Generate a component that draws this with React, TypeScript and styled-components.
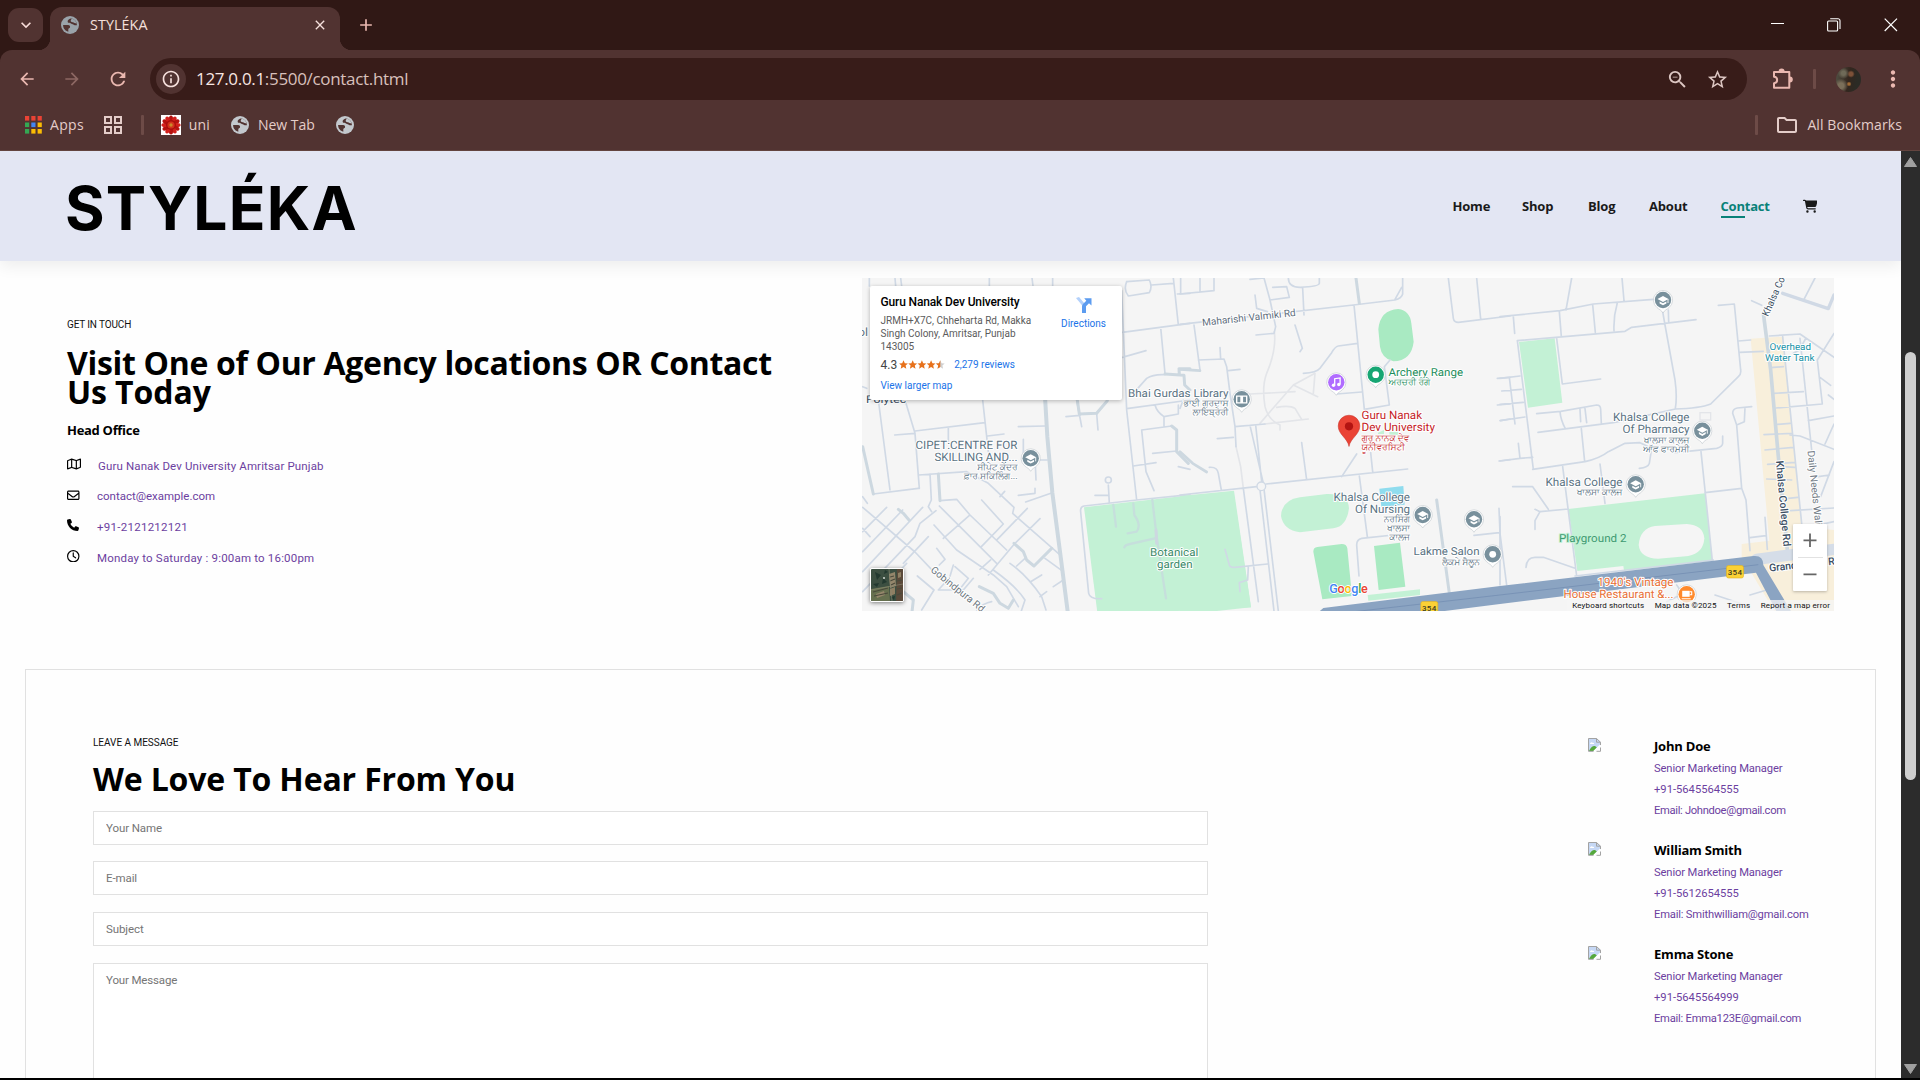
import React from 'react';
import styled, { createGlobalStyle } from 'styled-components';
import { FaCartShopping, FaRegMap, FaRegEnvelope, FaPhone, FaRegClock } from 'react-icons/fa6';
import { MdZoomOut, MdStarBorder, MdArrowBack, MdArrowForward, MdRefresh, MdOutlineFolder, MdClose, MdAdd, MdKeyboardArrowDown, MdMoreVert, MdInfoOutline } from 'react-icons/md';

const SANS = 'Roboto, "Noto Sans", sans-serif';
const UI = '"Open Sans", "Noto Sans", sans-serif';

const Global = createGlobalStyle`
  * { box-sizing: border-box; margin: 0; padding: 0; }
  body { background: #000; overflow: hidden; }
  svg { display: block; flex: none; }
`;

/* ---------- browser chrome ---------- */
const Window = styled.div`
  width: 1920px; height: 1080px; display: flex; flex-direction: column;
  overflow: hidden; border-bottom: 2px solid #000; background: #301815; font-family: ${UI};
`;
const TabStrip = styled.div`
  height: 50px; flex: none; display: flex; align-items: flex-end; background: #301815; padding-left: 8px;
`;
const TabSearch = styled.div`
  width: 35px; height: 34px; margin: 0 7px 8px 0; border-radius: 11px; background: #513331;
  display: flex; align-items: center; justify-content: center; color: #f8dcd8;
`;
const Tab = styled.div`
  position: relative; width: 290px; height: 43px; border-radius: 12px 12px 0 0; background: #513331;
  display: flex; align-items: center; padding: 0 12px 7px 11px; color: #f6e0dc;
  &::before, &::after {
    content: ''; position: absolute; bottom: 0; width: 12px; height: 12px;
  }
  &::before { left: -12px; background: radial-gradient(circle at 0 0, transparent 12px, #513331 12.5px); }
  &::after { right: -12px; background: radial-gradient(circle at 100% 0, transparent 12px, #513331 12.5px); }
`;
const TabTitle = styled.span`
  flex: 1; margin-left: 11px; font-size: 14.3px; line-height: 20px; letter-spacing: 0.1px; white-space: nowrap;
`;
const NewTab = styled.div`
  width: 24px; height: 24px; margin: 0 0 13px 14px; color: #eab8b0;
  display: flex; align-items: center; justify-content: center;
`;
const WindowButtons = styled.div`
  margin-left: auto; align-self: flex-start; display: flex; padding: 18px 22px 0 0; gap: 43px;
`;
const Toolbar = styled.div`
  height: 101px; flex: none; background: #513331; border-radius: 12px 12px 0 0; border-bottom: 1px solid #63443f;
`;
const NavRow = styled.div`
  height: 58px; display: flex; align-items: center; padding: 0 14px 0 15px; color: #eab8b0;
`;
const NavIcon = styled.div<{ $dim?: boolean }>`
  width: 24px; height: 24px; margin-right: 21px; display: flex; align-items: center; justify-content: center;
  color: ${p => (p.$dim ? '#8d6863' : '#eab8b0')};
  &:nth-child(3) { margin-left: 1px; margin-right: 20px; }
`;
const Omnibox = styled.div`
  width: 1597px; height: 42px; border-radius: 21px; background: #381c19;
  display: flex; align-items: center; padding: 0 18px 0 6px; color: #dcc6c2;
`;
const SiteInfo = styled.div`
  width: 30px; height: 30px; border-radius: 50%; background: #513331; color: #f6e0dc;
  display: flex; align-items: center; justify-content: center;
`;
const Url = styled.span`
  flex: 1; margin-left: 10px; font-size: 17px; line-height: 24px; letter-spacing: -0.32px; color: #d8c0bc;
`;
const Host = styled.span`color: #f8e6e2;`;
const OmniAction = styled.div`margin-left: 17px;`;
const Divider = styled.div<{ $l: number; $r: number }>`
  width: 3px; height: 20px; border-radius: 1px; background: #6d4b47; margin: 0 ${p => p.$r}px 0 ${p => p.$l}px;
`;
const Avatar = styled.div`
  width: 25px; height: 25px; border-radius: 50%; margin-right: 19px;
  background:
    radial-gradient(circle at 60% 28%, #7d5138 0 8%, transparent 16%),
    radial-gradient(circle at 52% 68%, #a06a35 0 5%, transparent 12%),
    radial-gradient(circle at 20% 75%, #7b6f5a 0 10%, transparent 26%),
    radial-gradient(circle at 30% 25%, #6f6a58 0 8%, transparent 22%),
    linear-gradient(100deg, #4d4a3e 10%, #33261e 50%, #2b2b25 80%);
`;
const Bookmarks = styled.div`
  height: 32px; margin-top: 1px; display: flex; align-items: center; padding: 0 18px 0 25px; color: #e4cdc9;
  font-size: 14px; line-height: 20px;
`;
const BookmarkLabel = styled.span<{ $l: number; $r: number; $ls?: number }>`
  margin: 0 ${p => p.$r}px 0 ${p => p.$l}px; letter-spacing: ${p => p.$ls ?? 0}px; white-space: nowrap;
`;
const Spacer = styled.div`flex: 1;`;

/* ---------- page ---------- */
const Viewport = styled.div`flex: 1; min-height: 0; display: flex; background: #fff;`;
const Page = styled.div`
  width: 1901px; height: 100%; overflow: hidden; background: #fefefe; font-family: ${SANS}; color: #000;
`;
const Scrollbar = styled.div`
  width: 19px; background: #2c2c2c; display: flex; flex-direction: column; align-items: center; padding: 6px 0 4px;
`;
const Thumb = styled.div`width: 11px; height: 428px; margin: 185px 0 auto; border-radius: 6px; background: #cfcfcf;`;
const Header = styled.header`
  position: relative; height: 110px; background: #e3e6f3; box-shadow: 0 5px 15px rgba(0, 0, 0, 0.07);
  display: flex; align-items: center; justify-content: space-between; padding: 0 84px 0 65px;
`;
const Logo = styled.h1`
  font-family: Inter, ${UI}; font-size: 60.5px; line-height: 62px; font-weight: 700; letter-spacing: 1.2px; padding-top: 4px;
`;
const Menu = styled.nav`display: flex; align-items: center; gap: 33px; padding-top: 1px;`;
const MenuLink = styled.a<{ $active?: boolean; $w: number }>`
  position: relative; width: ${p => p.$w}px; font: 700 13px/18px ${UI}; margin-top: -2px;
  letter-spacing: -0.2px; white-space: nowrap; color: ${p => (p.$active ? '#088178' : '#1a1a1a')};
  &::after {
    content: ''; position: absolute; left: 0; bottom: -3px; width: 24px; height: 2px;
    background: ${p => (p.$active ? '#088178' : 'transparent')};
  }
`;
const Contact = styled.section`
  display: flex; justify-content: space-between; padding: 17px 67px 0;
`;
const Details = styled.div`width: 720px; padding-top: 39px;`;
const Kicker = styled.p<{ $ls: number }>`
  font-size: 10px; line-height: 16px; letter-spacing: ${p => p.$ls}px; color: #111;
`;
const Headline = styled.h2<{ $mt: number; $lh: number; $ls: number }>`
  margin-top: ${p => p.$mt}px; font: 700 32px/${p => p.$lh}px ${UI};
  letter-spacing: ${p => p.$ls}px; white-space: nowrap;
`;
const HeadlineTail = styled.span`letter-spacing: -0.1px;`;
const Office = styled.h3`margin: 16px 0 17.8px; font: 700 13px/16px ${UI}; letter-spacing: -0.3px;`;
const InfoRow = styled.li`display: flex; align-items: center; height: 20px; margin-bottom: 10.6px; list-style: none;`;
const InfoIcon = styled.span<{ $w: number }>`width: ${p => p.$w}px; font-size: 13px; padding-bottom: 3px;`;
const InfoText = styled.span<{ $ls: number }>`
  font-size: 11.5px; line-height: 20px; color: #6c3fa0; letter-spacing: ${p => p.$ls}px; white-space: nowrap;
`;
const MapFrame = styled.div`position: relative; width: 972px; height: 333px; background: #f5f5f5; overflow: hidden;`;
const PlaceCard = styled.div`
  position: absolute; left: 8px; top: 8px; width: 252px; height: 114px; background: #fff; border-radius: 2px;
  box-shadow: 0 1px 4px rgba(0, 0, 0, 0.28); display: flex; justify-content: space-between; padding: 8px 16px 0 10.5px;
`;
const PlaceName = styled.div`font-size: 12px; font-weight: 500; line-height: 16px; letter-spacing: -0.14px; white-space: nowrap;`;
const Address = styled.div`margin-top: 4px; width: 158px; font-size: 10px; line-height: 13px; color: #5b5b5b;`;
const Rating = styled.div`display: flex; align-items: center; height: 18px; margin-top: 2.5px; font-size: 12px; color: #444;`;
const Stars = styled.svg`margin: 0 9px 0 2px;`;
const MapLink = styled.a`font-size: 10px; line-height: 14px; color: #1a73e8; white-space: nowrap;`;
const LargerMap = styled.div`margin-top: 5.5px; line-height: 14px; display: flex;`;
const Directions = styled.div`display: flex; flex-direction: column; align-items: center; gap: 4px; padding-top: 3px;`;
const Satellite = styled.div`
  position: absolute; left: 8px; top: 290px; width: 34px; height: 34px; border: 1px solid #fff; border-radius: 2px;
  box-shadow: 0 1px 4px rgba(0, 0, 0, 0.5); overflow: hidden;
`;
const ZoomControl = styled.div`
  position: absolute; right: 7px; top: 246px; width: 34px; height: 67px; background: #fff; border-radius: 1px;
  box-shadow: 0 1px 3px rgba(0, 0, 0, 0.25);
`;
const Attribution = styled.div`
  position: absolute; right: 0; bottom: 0; height: 11px; padding: 0 4px 0 5px; display: flex; gap: 10.5px;
  background: rgba(245, 245, 245, 0.75); font-size: 8px; line-height: 11px; letter-spacing: 0.14px; color: #111; white-space: nowrap;
`;

/* ---------- form ---------- */
const FormSection = styled.section`
  margin: 58px 25px 0 25px; height: 520px; border: 1px solid #e1e1e1; padding: 65px 67px 0;
  display: flex; justify-content: space-between;
`;
const Form = styled.form`width: 1115px; display: flex; flex-direction: column;`;
const FieldGroup = styled.div`margin-top: 14.6px; display: flex; flex-direction: column; gap: 16.75px;`;
const Field = styled.input`
  height: 34px; border: 1px solid #e1e1e1; padding: 0 12px; font: 11.5px ${SANS}; outline: none; background: #fff;
  letter-spacing: -0.1px;
  &::placeholder { color: #757575; opacity: 1; }
`;
const Message = styled.textarea`
  height: 180px; border: 1px solid #e1e1e1; padding: 8.5px 12px; font: 11.5px/16px ${SANS}; outline: none; resize: none;
  background: #fff; letter-spacing: -0.15px;
  &::placeholder { color: #757575; opacity: 1; }
`;
const People = styled.div`width: 220px; padding-top: 1px; display: flex; flex-direction: column; gap: 20px;`;
const Person = styled.div`display: flex; gap: 53px; svg { margin-top: 2px; }`;
const PersonName = styled.p`
  font: 700 13px/20px ${UI}; letter-spacing: -0.2px; white-space: nowrap; padding-bottom: 2px;
`;
const PersonLine = styled.p<{ $ls: number }>`
  font-size: 11.2px; line-height: 21px; letter-spacing: ${p => p.$ls}px; color: #6c3fa0; white-space: nowrap;
  &:last-child { margin-bottom: -1px; }
`;

/* ---------- small drawings ---------- */
const Globe = ({ fill = '#c3c8cd' }: { fill?: string }) => (
  <svg width="18" height="18" viewBox="0 0 18 18">
    <circle cx="9" cy="9" r="9" fill={fill} />
    <path d="M10.3 2.2 C7.5 3 6 4.6 6.8 6.2 C7.4 7.3 9 6.6 10 7.4 C11 8.4 12.6 8 13.6 9.2 L15.9 9.2 C15.9 5.8 13.6 3 10.3 2.2Z" fill="#513331" />
    <path d="M2.1 9 L7 9.1 C8.7 9.3 9.4 10.4 9 11.4 C8.6 12.3 7.3 12.2 7.3 13.3 L7.3 15.7 C4.3 15 2.1 12.4 2.1 9Z" fill="#513331" />
    <path d="M10.3 2.2 C10.9 3.4 9 4.5 9.9 5.6 C10.9 6.5 12.5 6 13.5 7 L15.6 7.4 C14.9 4.6 12.9 2.7 10.3 2.2Z" fill={fill} />
  </svg>
);

const AppsIcon = () => {
  const colors = ['#ea4335', '#ea4335', '#ea4335', '#34a853', '#4285f4', '#fbbc04', '#34a853', '#fbbc04', '#fbbc04'];
  return (
    <svg width="17" height="18" viewBox="0 0 17 18">
      {colors.map((c, i) => <rect key={i} x={(i % 3) * 6.3} y={Math.floor(i / 3) * 6.5} width="4.2" height="4.6" fill={c} />)}
    </svg>
  );
};

const Puzzle = () => (
  <svg width="22" height="22" viewBox="0 0 22 22">
    <path d="M2 4H17.3V19.8H2V15.2C6.2 15 6.2 9 2 8.8Z" fill="none" stroke="#eab8b0" strokeWidth="2" strokeLinejoin="round" />
    <path d="M6.6 3.5A3 3 0 0 1 12.6 3.5ZM17.8 8.6A3 3 0 0 1 17.8 14.6Z" fill="#eab8b0" />
  </svg>
);

const FlowerIcon = () => (
  <svg width="20" height="20" viewBox="-10 -10 20 20">
    <rect x="-10" y="-10" width="20" height="20" fill="#fff" />
    {Array.from({ length: 12 }, (_, i) => (
      <ellipse key={i} cx="0" cy="-6" rx="2.1" ry="3.6" fill={i % 2 ? '#d3201c' : '#b5120f'} transform={`rotate(${i * 30})`} />
    ))}
    <circle r="5" fill="#a90f0c" /><circle r="3.6" fill="#d3321c" /><circle r="1.7" fill="#c98a2b" />
  </svg>
);

const BrokenImage = () => (
  <svg width="13" height="14" viewBox="0 0 13 14">
    <path d="M.5 .5 H8.5 L12.5 4 V7.5 L7 13.2 H.5Z" fill="#c6d8f5" />
    <path d="M2 5.5 q1.5 -2 2.6 -.8 q1.6 -.2 1.6 1.3 H2Z" fill="#fff" />
    <path d="M1 13 C2.5 9.5 5 7.5 7 8 L9 9.5 L6 13Z" fill="#54a83c" />
    <path d="M12.5 7.2 L5.8 13.5" stroke="#fff" strokeWidth="1.6" />
    <path d="M5.5 13.3 H.5 V.5 H8.5 L12.5 4.2 V7 M8.5 .5 V4.2 H12.5 M12.5 9.5 V13.3 H8.5" fill="none" stroke="#a3a3a3" />
  </svg>
);

/* ---------- map ---------- */
const ROAD = '#d0d9e5';
const WIDE = '#cdd8e0';

const roadsWest = `
M28 24V48 M105 24L107 48 M122 24L125 48 M388 24V48 M516 24L519 48 M578 24V48
M800 35L868 30Q878 50 868 68L805 78Q790 60 800 35 M875 45L940 40 M940 24L955 165 M952 72L990 70 M962 24V70
M787 187L990 160 M902 172L915 310 M787 262L858 242 M785 62L800 420L830 690 M800 416L990 390
M820 370L860 325Q880 312 915 314 M885 405Q890 425 912 440L955 432V405 M912 440V470 M845 480L935 468 M845 480L858 605L882 662
M878 550L950 543 M820 588L888 578 M955 590L990 598 M830 690L990 674
M830 690L672 708Q660 710 662 726L686 970Q690 988 725 986 M705 676H745 M748 700L745 645
M650 390L665 470 M710 430L714 480 M618 440L660 436 M475 470L555 468 M383 498L432 492
M55 390L90 660 M135 390L165 490L178 655 M40 672L175 655 M104 495L165 490 M165 483L375 458 M368 390L385 545
M265 472V515 M176 615L320 605L385 640L462 712L458 730L600 855 M210 612L214 690L205 710L215 725
M490 508V560 M525 560L528 630 M540 570H562 M475 676L525 670V655 M497 696L577 668 M420 680L434 664
M240 692L290 688L330 735L440 840 M238 708L410 880 M365 690L430 762L362 832
M8 712L165 846L240 925 M80 712L8 785 M128 720L8 845 M188 712L8 905 M228 722L180 760L165 800L8 965 M205 800L130 880
M222 765L290 840L400 915L440 950L475 1010 M330 735L250 805 M502 715L412 808 M540 746L465 820L385 915 M392 870L360 898
M8 775L30 800 M8 680L22 700 M230 835L255 868L238 885 M280 885L265 935 M285 890L325 925L305 950 M340 925L310 960L235 960L262 930
M172 918L222 960L185 1020 M450 880Q500 915 545 980L558 1020 M545 915L512 935 M560 965L540 980 M555 865L610 905 M610 930L580 950 M495 865L470 888
M400 900Q470 950 495 990L480 1035 M395 995Q370 1000 350 1020 M60 965L140 880 M20 355L8 350`;
const roadsWestWide = `M235 612L240 692 M8 530L40 672 M652 390L658 432L710 430L742 392 M915 312L972 316L974 345L990 360 M958 314L957 296H990 M935 468L950 480V545L985 580
M115 718L130 730L147 750 M462 820L490 845L500 870L522 888L575 835 M358 950L400 970L420 1000L445 1015L460 990 M130 965L160 990L155 1035 M888 780L890 820`;
const parkPaths = 'M760 705L768 770 M820 700L823 735Q845 765 830 785L803 790 M877 690L890 800L905 900L918 985 M793 832Q795 825 810 822L885 805';

const roadsMid = `
M60 24V65 M102 24V62L0 72 M210 28L252 24 M252 24L270 90L287 170L282 190L228 195 M278 52L320 50L328 82L270 90
M325 24Q325 52 360 52Q418 50 418 40V24 M368 55L372 135 M0 163L520 105L645 90Q665 85 668 72V24 M645 88L665 52
M225 75L230 115L262 125 M42 165L60 300 M55 270L132 267L140 290L150 370L165 470L168 530 M120 233L122 267 M145 302L180 298 M0 415L10 390
M345 165L367 235L360 245 M533 220L475 228Q465 230 455 248L420 295Q410 308 370 310 M522 105L553 418L628 405L613 290L630 270
M470 372L545 366 M165 470L255 462 M112 506L160 502 M210 466L250 640L295 1023 M227 465L245 635 M240 660L282 1023 M0 675L230 650M258 642L683 597
M365 518L380 630 M485 620L530 552 M572 548L578 605 M538 618L562 800 M88 592Q112 590 115 610L124 660 M190 655L235 995 M135 838L148 885Q150 893 165 892L262 882 M205 890L203 930L178 938L180 965
M640 795L545 805Q530 808 530 825L537 918 M805 24L820 145Q822 157 835 157L990 138 M890 24L902 147 M957 715L960 790L980 945 M882 796L958 788
M952 325L990 322 M952 405L990 402 M962 452L990 447 M957 573L990 569`;
const pathsMid = 'M283 185Q290 240 260 310Q245 350 255 410Q265 450 300 465V480 M210 372L345 365M240 460L340 345L405 310L400 370 M340 345L413 380 M255 462L385 447 M290 412Q330 405 345 415L365 448 M168 530L182 590L190 655';

const roadsEast = `
M215 24L198 120 M366 24L372 92 M0 140L180 122L280 102L460 88 M178 124L184 200 M278 104L286 187 M352 98Q340 140 342 182 M40 140L44 190
M52 212L375 184L395 172L588 149 M505 120L506 155 M488 125L495 165L525 330Q532 380 526 415 M526 417Q600 415 632 402L715 320Q724 312 722 300L703 102L655 106
M715 213L752 210 M718 247L790 244 M52 212L100 598 M170 205L187 342L302 327 M0 325L60 318 M5 363L64 358 M0 403L70 397 M0 452L75 441 M28 322L45 462
M110 431L182 424L290 405Q302 405 302 418L304 460 M180 425Q182 450 196 476 M240 418L242 455 M255 416L260 458 M114 487L340 458Q380 452 400 445L526 417
M244 476L254 575 M55 520L60 565 M0 573L60 565 L98 562M98 598L255 575Q300 565 325 545L375 520L420 518L455 535L448 580Q445 592 418 595
M525 548L650 535Q668 530 668 520V498 M603 545L637 872 M188 590L230 918 M300 582L315 700 M615 668L725 655 M38 650H98L145 718 M105 718L120 725L205 717M120 725L105 752V778
M78 892Q80 862 105 862H130L225 895 M0 740V945 M755 410L712 414Q698 416 698 430L710 465L725 655L738 690L750 842 M735 412L733 455L710 465 M795 742L802 838 M750 803L798 797
M755 92L785 106 M808 198L900 192L1002 262 M918 204L898 240L880 250 M945 24L910 92 M1002 190L952 270L967 402L828 414 M900 205L935 540 M848 200L905 760
M812 293L850 290 M822 370L910 365 M833 463L870 460 M792 494L875 490 M795 540L880 532 M803 583L885 577 M875 630L800 627 M845 590L885 592 M865 685L893 682
M870 495L900 498L1002 538 M925 452L1002 438 M975 522L1002 462 M960 322L992 346 M985 375L1002 388 M955 620L988 615 M1002 575L962 680 M872 722L1002 714 M960 764L1002 755
M500 995L560 965 M645 975L720 1000 M750 975L800 960 M530 945L555 980 M225 918L640 870`;

const Road = ({ d, w = 5, c = ROAD }: { d: string; w?: number; c?: string }) => (
  <path d={d} fill="none" stroke={c} strokeWidth={w} strokeLinecap="round" strokeLinejoin="round" />
);

type LabelProps = { x: number; y: number; w?: number; t: string; c?: string; s?: number; end?: boolean; rot?: number; halo?: string; weight?: number };
const Label = ({ x, y, w, t, c = '#5a7282', s = 11.5, end, rot, halo = '#fff', weight = 400 }: LabelProps) => (
  <text x={x} y={y} fontSize={s} fontWeight={weight} fill={c} stroke={halo} strokeWidth="2" paintOrder="stroke" strokeLinejoin="round"
    textLength={w} lengthAdjust={w ? 'spacingAndGlyphs' : undefined} textAnchor={end ? 'end' : 'start'} textRendering="geometricPrecision"
    transform={rot ? `rotate(${rot} ${x} ${y})` : undefined} fontFamily={SANS}>{t}</text>
);

const Pin = ({ x, y, kind, c = '#78909c' }: { x: number; y: number; kind: 'school' | 'book' | 'dot' | 'music' | 'cup'; c?: string }) => (
  <g transform={`translate(${x} ${y})`}>
    <path d="M0 13 C-1.5 10 -4 9.6 -6 7.6 A9.6 9.6 0 1 1 6 7.6 C4 9.6 1.5 10 0 13Z" fill="#fff" stroke="#b5bcc2" strokeWidth=".5" />
    <circle r="8.2" fill={c} />
    {kind === 'school' && <><path d="M-5.5 -1 L0 -4 L5.5 -1 L0 2Z" fill="#fff" /><path d="M-3.4 1.4 V3.4 L0 5.2 L3.4 3.4 V1.4 L0 3.2Z" fill="#fff" /><path d="M5 -1V3" stroke="#fff" strokeWidth=".9" /></>}
    {kind === 'book' && <path d="M-5 -3.2 H-.7 V3.6 H-5Z M.7 -3.2 H5 V3.6 H.7Z" fill="none" stroke="#fff" strokeWidth="1.4" />}
    {kind === 'dot' && <circle r="3.4" fill="#fff" />}
    {kind === 'music' && <><path d="M-1.6 3 V-3.6 L3.8 -4.4 V2" fill="none" stroke="#fff" strokeWidth="1.3" /><circle cx="-2.8" cy="3" r="1.7" fill="#fff" /><circle cx="2.5" cy="2.2" r="1.7" fill="#fff" /></>}
    {kind === 'cup' && <><path d="M-4.5 -3.5 H3 V2.5 H-4.5Z" fill="#fff" /><path d="M3 -2.5 H5 V.5 H3 M-5 4.5 H4" fill="none" stroke="#fff" strokeWidth="1.1" /></>}
  </g>
);

const Shield = ({ x, y }: { x: number; y: number }) => (
  <g>
    <rect x={x - 8.5} y={y - 6} width="17" height="12.5" rx="2" fill="#fbd135" stroke="#e0b21c" strokeWidth=".6" />
    <text x={x} y={y + 3.4} fontSize="8" fontWeight="500" fill="#3c3a20" textAnchor="middle" fontFamily={SANS} letterSpacing=".3">354</text>
  </g>
);

const NAVY = '#3c4f63';
const CityMap = () => (
  <svg width="972" height="333" viewBox="862 278 972 333">
    <g transform="translate(860 270) scale(.33333)">
      <path d="M672 712L990 676H1122L1173 1012L713 1035Z" fill="#c3f1d5" />
      <Road d={roadsWest} />
      <Road d={parkPaths} c="#c6dfdc" w={7} />
      <circle cx="745" cy="630" r="9" fill="none" stroke={ROAD} strokeWidth="5" />
      <Road d={roadsWestWide} w={9} c={WIDE} />
      <Road d="M555 380L562 500L577 668L602 860L625 1040" w={12} c={WIDE} />
    </g>
    <g transform="translate(1180 270) scale(.33333)">
      <path d="M0 678L162 662L213 1012L0 1035Z" fill="#c3f1d5" />
      <path d="M595 178Q600 120 655 117Q690 122 694 160L701 215Q695 272 640 274Q605 265 600 230Z" fill="#a9eac2" />
      <path d="M303 738Q305 690 360 682L440 672Q505 670 507 715Q500 770 460 775L360 787Q310 780 303 738Z" fill="#c3f1d5" />
      <path d="M400 845Q400 832 412 831L485 822Q500 822 502 835L516 978L427 988Z M582 828L660 818L676 950L596 960Z" fill="#a9eac2" />
      <path d="M563 975L720 958V975L565 992Z" fill="#c3f1d5" />
      <path d="M598 656L670 648L674 704L604 710Z" fill="#8fdcee" />
      <path d="M594 488L612 480V492H594Z M628 486H655V496H628Z" fill="#c3f1d5" />
      <Road d={pathsMid} c="#e3e5e9" />
      <Road d={roadsMid} />
      <Road d="M528 24L538 100 M770 690L808 970" w={9} c={WIDE} />
      <Road d="M0 298L60 302 M0 545L38 580L80 606" w={8} c={WIDE} />
      <circle cx="244" cy="649" r="13" fill="#f5f5f5" stroke={ROAD} strokeWidth="4" />
    </g>
    <g transform="translate(1500 270) scale(.33333)">
      <path d="M752 206L850 200L905 770L1002 780V1035H830L725 860V822L808 812Z" fill="#f8efdb" />
      <path d="M57 216L164 205L187 398L84 413Z M205 717L615 670L637 872L372 902L370 888L232 903Z" fill="#c3f1d5" />
      <path d="M416 825Q420 775 465 768L560 762Q610 765 613 805Q610 850 565 858L475 866Q420 865 416 825Z" fill="#f5f5f5" />
      <Road d={roadsEast} />
      <rect x="600" y="428" width="32" height="22" fill="none" stroke="#e3e5e9" strokeWidth="4" />
      <Road d="M790 130L812 300L835 560L862 840" w={11} c={WIDE} />
      <Road d="M848 70L985 116L1002 75" w={10} />
      <Road d="M770 868L1002 838" w={34} c="#d5dde8" />
      <path d="M-530 1014L0 948L760 858Q790 855 790 885L880 1035H835L768 908L0 1002L-300 1040H-560Z" fill="#8ba4c2" />
      <path d="M-480 1030L0 975L775 884" stroke="#7893b6" strokeWidth="3" fill="none" />
    </g>

    <Label x={850} y={336} w={18} t="Col" />
    <Label x={866} y={402.5} w={40} t="Polytec" c={NAVY} s={10.5} />
    <Label x={1202.5} y={326} w={94} t="Maharishi Valmiki Rd" rot={-6.2} s={10} c="#5f6f7e" />
    <Label x={930} y={571} w={66} t="Gobindpura Rd" rot={39} s={10} c="#6d7780" />
    <Label x={1017.5} y={449} w={102} t="CIPET:CENTRE FOR" end />
    <Label x={1017.5} y={460.5} w={83} t="SKILLING AND..." end />
    <Label x={1017.5} y={469.5} t="ਸੀਪੇਟ ਕੇਂਦਰ" s={9} end />
    <Label x={1017.5} y={478.5} t="ਫ਼ਾਰ ਸਕਿਲਿੰਗ..." s={9} end />
    <Label x={1228.5} y={396.7} w={100.5} t="Bhai Gurdas Library" s={11} end />
    <Label x={1228.5} y={405.5} t="ਭਾਈ ਗੁਰਦਾਸ" s={9} end />
    <Label x={1228.5} y={414.5} t="ਲਾਇਬ੍ਰੇਰੀ" s={9} end />
    <Label x={1388.5} y={375.7} w={74.5} t="Archery Range" c="#1e8e5c" s={11} />
    <Label x={1388.5} y={384.7} t="ਅਰਚਰੀ ਰੰਗੇ" c="#1e8e5c" s={9} />
    <Label x={1361.5} y={419.3} w={60.5} t="Guru Nanak" c="#c5221f" />
    <Label x={1361.5} y={431.3} w={73.5} t="Dev University" c="#c5221f" />
    <Label x={1361.5} y={441} t="ਗੁਰੂ ਨਾਨਕ ਦੇਵ" c="#c5221f" s={9} />
    <Label x={1361.5} y={450.3} t="ਯੂਨੀਵਰਸਿਟੀ" c="#c5221f" s={9} />
    <Label x={1410} y={501.3} w={76.5} t="Khalsa College" end />
    <Label x={1410} y={513.3} w={55} t="Of Nursing" end />
    <Label x={1410} y={522.3} t="ਨਰਸਿੰਗ" s={9} end />
    <Label x={1410} y={531.3} t="ਖਾਲਸਾ" s={9} end />
    <Label x={1410} y={540.3} t="ਕਾਲਜ" s={9} end />
    <Label x={1479.5} y={555} w={66} t="Lakme Salon" s={11} end />
    <Label x={1480} y={564.5} t="ਲੈਕਮੇ ਸੈਲੂਨ" s={9} end />
    <Label x={1150} y={556} w={48.3} t="Botanical" c="#3a8a68" s={11} />
    <Label x={1157} y={567.7} w={35.5} t="garden" c="#3a8a68" s={11} />
    <Label x={1768} y={317} w={42} t="Khalsa Co" rot={-66} s={10} c={NAVY} />
    <Label x={1769.5} y={350} w={41.5} t="Overhead" c="#1390a5" s={9.5} />
    <Label x={1765} y={361} w={49.5} t="Water Tank" c="#1390a5" s={9.5} />
    <Label x={1689.5} y={421.2} w={76.5} t="Khalsa College" end />
    <Label x={1689.5} y={433.2} w={67} t="Of Pharmacy" end />
    <Label x={1689.5} y={442.7} t="ਖਾਲਸਾ ਕਾਲਜ" s={9} end />
    <Label x={1689.5} y={451.7} t="ਆੱਫ ਫਾਰਮੇਸੀ" s={9} end />
    <Label x={1622.5} y={486.3} w={77} t="Khalsa College" end />
    <Label x={1622.5} y={495.3} t="ਖਾਲਸਾ ਕਾਲਜ" s={9} end />
    <Label x={1559} y={541.5} w={67.5} t="Playground 2" c="#3f9a72" halo="#c3f1d5" s={11} />
    <Label x={1776} y={461} w={86} t="Khalsa College Rd" rot={85} s={10.5} c={NAVY} weight={500} />
    <Label x={1807.5} y={451} w={75} t="Daily Needs Wali" rot={84} s={10} c="#727b85" />
    <Label x={1769.5} y={571.5} w={66} t="Grand Trunk R" rot={-6} s={10.5} c={NAVY} weight={500} />
    <Label x={1673.5} y={585.7} w={76} t="1940's Vintage" c="#e86f35" end />
    <Label x={1673.5} y={597.5} w={110} t="House Restaurant &..." c="#e86f35" end />
    <text x="1329.3" y="593.3" fontSize="12.6" fontFamily={SANS} fontWeight="500" stroke="#fff" strokeWidth="1.8" paintOrder="stroke" textLength="38.5">
      <tspan fill="#4285f4">G</tspan><tspan fill="#ea4335">o</tspan><tspan fill="#fbbc04">o</tspan><tspan fill="#4285f4">g</tspan><tspan fill="#34a853">l</tspan><tspan fill="#ea4335">e</tspan>
    </text>
    <Pin x={1030.7} y={458.3} kind="school" />
    <Pin x={1241.7} y={399.3} kind="book" />
    <Pin x={1336.3} y={382.3} kind="music" c="#b06cff" />
    <Pin x={1375.7} y={374.7} kind="dot" c="#17a673" />
    <Pin x={1422.7} y={515} kind="school" />
    <Pin x={1474} y={519.3} kind="school" />
    <Pin x={1492.7} y={554.3} kind="dot" />
    <Pin x={1663} y={300} kind="school" />
    <Pin x={1702.3} y={430.7} kind="school" />
    <Pin x={1635.7} y={484.3} kind="school" />
    <Pin x={1686.7} y={594.3} kind="cup" c="#ff8a2c" />
    <Shield x={1735} y={571.5} />
    <Shield x={1429.3} y={607.5} />
    <path d="M1349 446.5 C1347.5 438 1338.2 434.5 1338.2 426 A10.8 10.8 0 0 1 1359.8 426 C1359.8 434.5 1350.5 438 1349 446.5Z" fill="#ea4335" stroke="#c5322a" strokeWidth=".5" />
    <circle cx="1349" cy="426.3" r="4.1" fill="#b31412" />
  </svg>
);

const starPath = (cx: number) =>
  `M${cx} 0.3 L${cx + 1.3} 3.2 L${cx + 4.4} 3.5 L${cx + 2.1} 5.6 L${cx + 2.8} 8.7 L${cx} 7.1 L${cx - 2.8} 8.7 L${cx - 2.1} 5.6 L${cx - 4.4} 3.5 L${cx - 1.3} 3.2Z`;

const info = [
  { icon: <FaRegMap size={14} />, iconWidth: 31, text: 'Guru Nanak Dev University Amritsar Punjab', ls: 0.13 },
  { icon: <FaRegEnvelope size={12.5} />, iconWidth: 30, text: 'contact@example.com', ls: -0.01 },
  { icon: <FaPhone size={12} />, iconWidth: 30, text: '+91-2121212121', ls: 0.27 },
  { icon: <FaRegClock size={12.5} />, iconWidth: 30, text: 'Monday to Saturday : 9:00am to 16:00pm', ls: 0.19 },
];

const people = [
  { name: 'John Doe', phone: '+91-5645564555', email: 'Johndoe@gmail.com', ls: -0.32 },
  { name: 'William Smith', phone: '+91-5612654555', email: 'Smithwilliam@gmail.com', ls: -0.19 },
  { name: 'Emma Stone', phone: '+91-5645564999', email: 'Emma123E@gmail.com', ls: -0.24 },
];

export default function App() {
  return (
    <Window>
      <Global />
      <TabStrip>
        <TabSearch><MdKeyboardArrowDown size={20} /></TabSearch>
        <Tab>
          <Globe fill="#9aa3aa" />
          <TabTitle>STYLÉKA</TabTitle>
          <MdClose size={16} />
        </Tab>
        <NewTab><MdAdd size={20} /></NewTab>
        <WindowButtons>
          <svg width="13" height="14"><path d="M0 5.5H13" stroke="#fff" /></svg>
          <svg width="14" height="14" fill="none" stroke="#fff" strokeWidth="1.1"><rect x=".6" y="3" width="10" height="10" rx="1" /><path d="M3.2 .8H11a2 2 0 0 1 2 2V11" /></svg>
          <svg width="14" height="14"><path d="M.7 .7L13 13M13 .7L.7 13" stroke="#fff" strokeWidth="1.2" /></svg>
        </WindowButtons>
      </TabStrip>
      <Toolbar>
        <NavRow>
          <NavIcon><MdArrowBack size={20} /></NavIcon>
          <NavIcon $dim><MdArrowForward size={20} /></NavIcon>
          <NavIcon><MdRefresh size={22} /></NavIcon>
          <Omnibox>
            <SiteInfo><MdInfoOutline size={20} /></SiteInfo>
            <Url><Host>127.0.0.1</Host>:5500/contact.html</Url>
            <OmniAction><MdZoomOut size={23} /></OmniAction>
            <OmniAction><MdStarBorder size={23} /></OmniAction>
          </Omnibox>
          <Spacer />
          <Puzzle />
          <Divider $l={19} $r={20} />
          <Avatar />
          <MdMoreVert size={26} />
        </NavRow>
        <Bookmarks>
          <AppsIcon />
          <BookmarkLabel $l={8} $r={20} $ls={0.3}>Apps</BookmarkLabel>
          <svg width="18" height="18" fill="none" stroke="#e4cdc9" strokeWidth="2"><path d="M1 1H7V7H1ZM11 1H17V7H11ZM1 11H7V17H1ZM11 11H17V17H11Z" /></svg>
          <Divider $l={19} $r={17} />
          <FlowerIcon />
          <BookmarkLabel $l={8} $r={21} $ls={0.1}>uni</BookmarkLabel>
          <Globe />
          <BookmarkLabel $l={9} $r={21}>New Tab</BookmarkLabel>
          <Globe />
          <Spacer />
          <Divider $l={0} $r={17} />
          <MdOutlineFolder size={24} />
          <BookmarkLabel $l={8} $r={0} $ls={0.1}>All Bookmarks</BookmarkLabel>
        </Bookmarks>
      </Toolbar>

      <Viewport>
        <Page>
          <Header>
            <Logo>STYLÉKA</Logo>
            <Menu>
              <MenuLink $w={36.5}>Home</MenuLink>
              <MenuLink $w={33}>Shop</MenuLink>
              <MenuLink $w={28}>Blog</MenuLink>
              <MenuLink $w={38.5}>About</MenuLink>
              <MenuLink $w={49} $active>Contact</MenuLink>
              <FaCartShopping size={14.5} color="#1a1a1a" />
            </Menu>
          </Header>

          <Contact>
            <Details>
              <Kicker $ls={-0.14}>GET IN TOUCH</Kicker>
              <Headline $mt={15} $lh={29} $ls={-0.32}>
                Visit One of Our Agency locations OR Contact<br /><HeadlineTail>Us Today</HeadlineTail>
              </Headline>
              <Office>Head Office</Office>
              <ul>
                {info.map(r => (
                  <InfoRow key={r.text}>
                    <InfoIcon $w={r.iconWidth}>{r.icon}</InfoIcon>
                    <InfoText $ls={r.ls}>{r.text}</InfoText>
                  </InfoRow>
                ))}
              </ul>
            </Details>
            <MapFrame>
              <CityMap />
              <PlaceCard>
                <div>
                  <PlaceName>Guru Nanak Dev University</PlaceName>
                  <Address>JRMH+X7C, Chheharta Rd, Makka Singh Colony, Amritsar, Punjab 143005</Address>
                  <Rating>
                    4.3
                    <Stars width="46" height="9" viewBox="0 0 46 9">
                      {[4.5, 13.7, 22.9, 32.1].map(cx => <path key={cx} d={starPath(cx)} fill="#e7711b" />)}
                      <path d={starPath(41.3)} fill="#d0d0d0" />
                      <path d="M41.3 .3V7.1L38.5 8.7L39.2 5.6L36.9 3.5L40 3.2Z" fill="#e7711b" />
                    </Stars>
                    <MapLink>2,279 reviews</MapLink>
                  </Rating>
                  <LargerMap><MapLink>View larger map</MapLink></LargerMap>
                </div>
                <Directions>
                  <svg width="16" height="16" viewBox="0 0 16 16">
                    <path d="M0 1L3 0L8.5 6.5L7 9.5Z" fill="#b3d1fb" />
                    <path d="M6 16V9.5Q6 8 7 7L10.3 3.7L8.2 1.2H15.5V8.5L13 6.2L10 9.2V16Z" fill="#5c9cf0" />
                  </svg>
                  <MapLink>Directions</MapLink>
                </Directions>
              </PlaceCard>
              <Satellite>
                <svg width="32" height="32" viewBox="0 0 32 32">
                  <rect width="32" height="32" fill="#3c4f41" />
                  <path d="M0 20L18 17L19 32H0Z" fill="#66704f" />
                  <path d="M18 5L24 3L25 17L19 19ZM5 25L13 22L14 26L6 29Z" fill="#94866b" />
                  <path d="M26 0H32V32H25Z" fill="#5b4a3a" />
                  <path d="M19 20L24 18L24 25L19 27ZM27 4L30 3V8L27 9Z" fill="#8f7f63" />
                  <path d="M19 8L23 7M19 12L24 10M20 16L24 14M2 23L17 19M3 27L17 24M26 12L31 11M26 20L31 19M26 26L31 24" stroke="#4a4a3b" strokeWidth="1.1" />
                  <path d="M4 3L10 6L6 11ZM12 9L16 13L11 15ZM2 15L8 14L6 18ZM14 1L17 3L13 5ZM20 28L24 27L23 31Z" fill="#22382f" />
                  <circle cx="13" cy="9" r="1.1" fill="#c9cfc8" />
                  <path d="M0 21L32 15M18 0L21 32" stroke="#8c8a74" strokeWidth=".6" />
                </svg>
              </Satellite>
              <ZoomControl>
                <svg width="34" height="67">
                  <path d="M10.5 16.3H23.5M17 9.5V23M10.5 50.3H23.5" stroke="#666" strokeWidth="1.8" />
                  <path d="M5 33.5H30" stroke="#e2e2e2" />
                </svg>
              </ZoomControl>
              <Attribution>
                <span>Keyboard shortcuts</span><span>Map data ©2025</span><span>Terms</span><span>Report a map error</span>
              </Attribution>
            </MapFrame>
          </Contact>

          <FormSection>
            <Form>
              <Kicker $ls={-0.03}>LEAVE A MESSAGE</Kicker>
              <Headline $mt={11} $lh={34} $ls={-0.16}>We Love To Hear From You</Headline>
              <FieldGroup>
                <Field placeholder="Your Name" />
                <Field placeholder="E-mail" />
                <Field placeholder="Subject" />
                <Message placeholder="Your Message" />
              </FieldGroup>
            </Form>
            <People>
              {people.map(p => (
                <Person key={p.name}>
                  <BrokenImage />
                  <div>
                    <PersonName>{p.name}</PersonName>
                    <PersonLine $ls={-0.12}>Senior Marketing Manager</PersonLine>
                    <PersonLine $ls={0}>{p.phone}</PersonLine>
                    <PersonLine $ls={p.ls}>Email: {p.email}</PersonLine>
                  </div>
                </Person>
              ))}
            </People>
          </FormSection>
        </Page>
        <Scrollbar>
          <svg width="13" height="10"><path d="M6.5 .5L12.5 9.5H.5Z" fill="#a0a0a0" stroke="#a0a0a0" strokeLinejoin="round" /></svg>
          <Thumb />
          <svg width="13" height="10"><path d="M6.5 9.5L12.5 .5H.5Z" fill="#a0a0a0" stroke="#a0a0a0" strokeLinejoin="round" /></svg>
        </Scrollbar>
      </Viewport>
    </Window>
  );
}
